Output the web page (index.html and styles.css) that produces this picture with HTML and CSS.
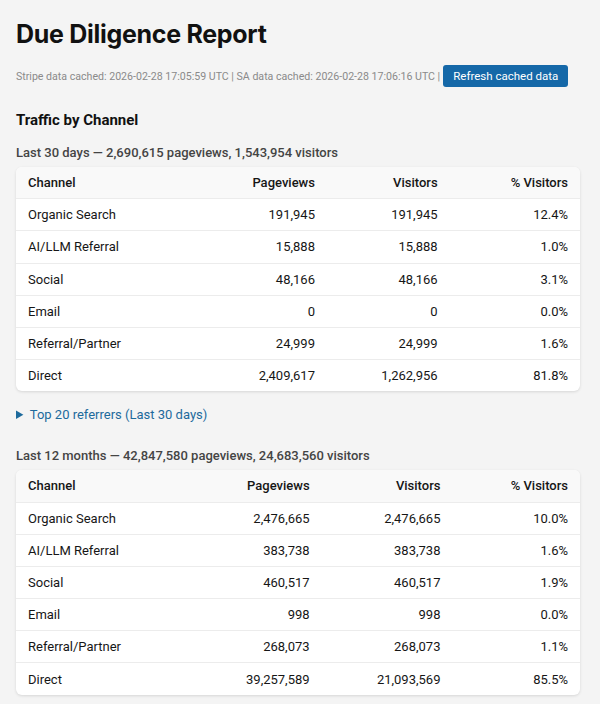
FILE: index.html
```html
<!DOCTYPE html>
<html>
<head>
<meta charset="utf-8">
<link rel="stylesheet" href="styles.css">
</head>
<body>
<main class="page">
  <h1 class="title">Due Diligence Report</h1>
  <div class="meta">
    <span>Stripe data cached: 2026-02-28 17:05:59 UTC | SA data cached: 2026-02-28 17:06:16 UTC |</span>
    <button class="btn">Refresh cached data</button>
  </div>
  <h2 class="section">Traffic by Channel</h2>

  <h3 class="period">Last 30 days — 2,690,615 pageviews, 1,543,954 visitors</h3>
  <div class="card">
    <table class="tbl">
      <thead><tr><th>Channel</th><th class="num">Pageviews</th><th class="num">Visitors</th><th class="num pct">% Visitors</th></tr></thead>
      <tbody>
        <tr><td>Organic Search</td><td class="num">191,945</td><td class="num">191,945</td><td class="num pct">12.4%</td></tr>
        <tr><td>AI/LLM Referral</td><td class="num">15,888</td><td class="num">15,888</td><td class="num pct">1.0%</td></tr>
        <tr><td>Social</td><td class="num">48,166</td><td class="num">48,166</td><td class="num pct">3.1%</td></tr>
        <tr><td>Email</td><td class="num">0</td><td class="num">0</td><td class="num pct">0.0%</td></tr>
        <tr><td>Referral/Partner</td><td class="num">24,999</td><td class="num">24,999</td><td class="num pct">1.6%</td></tr>
        <tr><td>Direct</td><td class="num">2,409,617</td><td class="num">1,262,956</td><td class="num pct">81.8%</td></tr>
      </tbody>
    </table>
  </div>

  <details class="refs"><summary>Top 20 referrers (Last 30 days)</summary></details>

  <h3 class="period">Last 12 months — 42,847,580 pageviews, 24,683,560 visitors</h3>
  <div class="card">
    <table class="tbl">
      <thead><tr><th>Channel</th><th class="num">Pageviews</th><th class="num">Visitors</th><th class="num pct">% Visitors</th></tr></thead>
      <tbody>
        <tr><td>Organic Search</td><td class="num">2,476,665</td><td class="num">2,476,665</td><td class="num pct">10.0%</td></tr>
        <tr><td>AI/LLM Referral</td><td class="num">383,738</td><td class="num">383,738</td><td class="num pct">1.6%</td></tr>
        <tr><td>Social</td><td class="num">460,517</td><td class="num">460,517</td><td class="num pct">1.9%</td></tr>
        <tr><td>Email</td><td class="num">998</td><td class="num">998</td><td class="num pct">0.0%</td></tr>
        <tr><td>Referral/Partner</td><td class="num">268,073</td><td class="num">268,073</td><td class="num pct">1.1%</td></tr>
        <tr><td>Direct</td><td class="num">39,257,589</td><td class="num">21,093,569</td><td class="num pct">85.5%</td></tr>
      </tbody>
    </table>
  </div>
</main>
</body>
</html>
```

FILE: styles.css
```css
html, body {
  margin: 0;
  padding: 0;
  background: #f4f4f4;
}
body {
  font-family: Roboto, "Noto Sans", sans-serif;
  color: #161616;
}
.page {
  padding: 16px 20px 20px 16px;
}
.title {
  margin: 0;
  font-family: Inter, Roboto, sans-serif;
  font-size: 25px;
  font-weight: 700;
  line-height: 36px;
  letter-spacing: -0.3px;
  color: #111;
}
.meta {
  margin-top: 13px;
  display: flex;
  align-items: center;
  gap: 3px;
  font-size: 10.6px;
  color: #8a8a8a;
  white-space: nowrap;
}
.btn {
  font-family: inherit;
  font-size: 11.5px;
  color: #fff;
  background: #1568a8;
  border: none;
  border-radius: 3px;
  height: 22px;
  padding: 0 10px;
  white-space: nowrap;
}
.section {
  margin: 22px 0 0;
  font-size: 15px;
  font-weight: 700;
  line-height: 22px;
  color: #111;
}
.period {
  margin: 13px 0 5px;
  font-size: 13px;
  font-weight: 500;
  color: #444;
  line-height: 18px;
}
.card {
  background: #fff;
  border-radius: 6px;
  box-shadow: 0 1px 3px rgba(0,0,0,0.12);
  overflow: hidden;
}
.tbl {
  width: 100%;
  border-collapse: collapse;
  font-size: 13px;
}
.tbl th {
  background: #f9f9f9;
  font-weight: 500;
  text-align: left;
}
.tbl th, .tbl td {
  height: 31.2px;
  padding: 0 12px;
  border-bottom: 1px solid #ececec;
}
.tbl tbody tr:last-child td {
  border-bottom: none;
}
.tbl .num {
  text-align: right;
}
.tbl .pct {
  padding-left: 16px;
}
.refs {
  margin-top: 16px;
  font-size: 13px;
  color: #1d6a9c;
}
.refs summary {
  cursor: pointer;
}
.refs + .period {
  margin-top: 25px;
}
```
